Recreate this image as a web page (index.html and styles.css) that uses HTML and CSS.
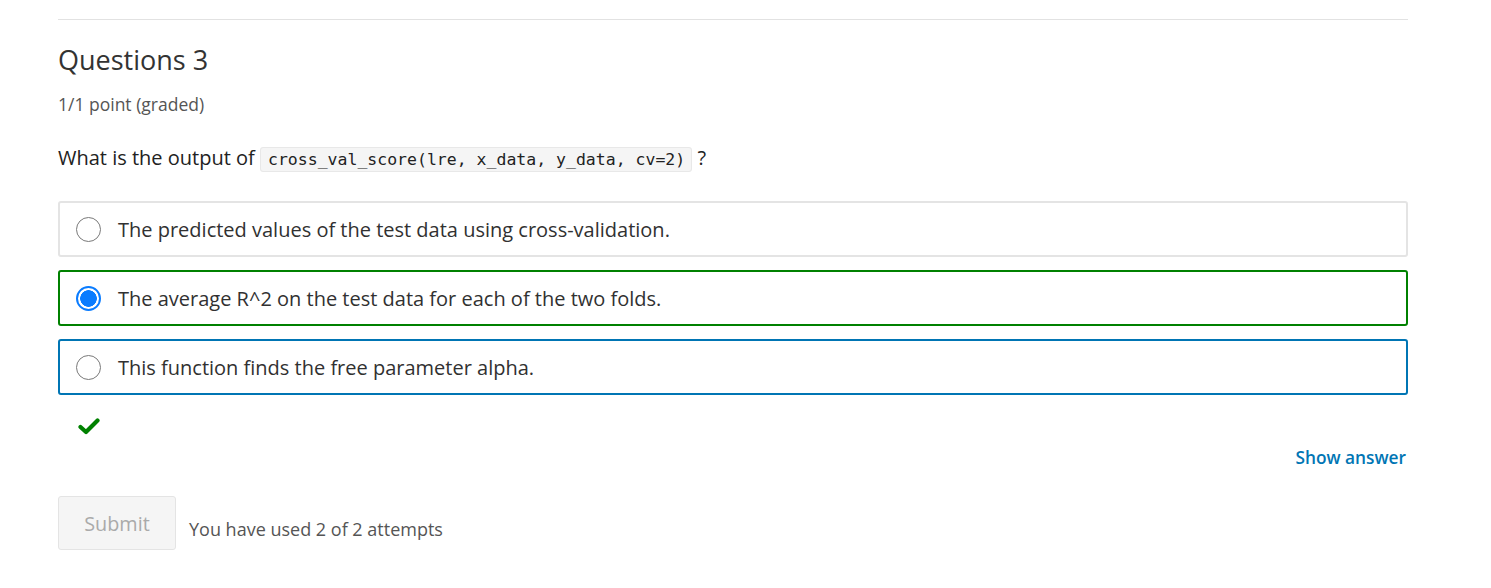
FILE: index.html
```html
<!DOCTYPE html>
<html>
<head>
<meta charset="utf-8">
<link rel="stylesheet" href="styles.css">
</head>
<body>
<div class="page">
  <hr class="rule">
  <h2 class="title">Questions 3</h2>
  <div class="points">1/1 point (graded)</div>
  <p class="question">What is the output of <code class="code">cross_val_score(lre, x_data, y_data, cv=2)</code> ?</p>
  <div class="options">
    <label class="option">
      <span class="radio"></span>
      <span class="opt-text">The predicted values of the test data using cross-validation.</span>
    </label>
    <label class="option correct">
      <span class="radio checked"></span>
      <span class="opt-text">The average R^2 on the test data for each of the two folds.</span>
    </label>
    <label class="option focused">
      <span class="radio"></span>
      <span class="opt-text">This function finds the free parameter alpha.</span>
    </label>
  </div>
  <div class="status">
    <svg class="check" width="22" height="17" viewBox="0 0 22 17"><path d="M2.5 9 L8 14 L19.5 2.5" fill="none" stroke="#008100" stroke-width="4.2" stroke-linecap="round" stroke-linejoin="round"/></svg>
  </div>
  <div class="actions-top">
    <a class="show-answer">Show answer</a>
  </div>
  <div class="actions">
    <button class="submit" disabled>Submit</button>
    <span class="attempts">You have used 2 of 2 attempts</span>
  </div>
</div>
</body>
</html>
```
FILE: styles.css
```css
html, body {
  margin: 0;
  padding: 0;
  background: #fff;
}
body {
  font-family: "Open Sans", "Liberation Sans", sans-serif;
  color: #313131;
}
.page {
  width: 1350px;
  margin-left: 58px;
  padding-top: 19px;
}
.rule {
  margin: 0;
  border: 0;
  border-top: 1px solid #e2e2e2;
}
.title {
  margin: 21px 0 0;
  font-size: 27px;
  font-weight: 400;
  line-height: 38px;
  color: #333;
}
.points {
  margin-top: 13px;
  font-size: 17.5px;
  line-height: 24px;
  color: #555;
}
.question {
  margin: 28px 0 0;
  font-size: 20px;
  line-height: 27px;
  color: #222;
}
.code {
  font-family: "DejaVu Sans Mono", "Liberation Mono", monospace;
  font-size: 16.5px;
  background: #f5f5f5;
  border: 1px solid #e8e8e8;
  border-radius: 3px;
  padding: 2px 6px 2px 7px;
  color: #222;
}
.options {
  margin-top: 28px;
  display: flex;
  flex-direction: column;
  gap: 13px;
}
.option {
  display: flex;
  align-items: center;
  height: 52px;
  border: 2px solid #e4e4e4;
  border-radius: 3px;
  padding-left: 16px;
  box-sizing: content-box;
}
.option.correct { border-color: #008100; }
.option.focused { border-color: #0075b4; }
.radio {
  width: 25px;
  height: 25px;
  border: 1.5px solid #797979;
  border-radius: 50%;
  box-sizing: border-box;
  flex: none;
}
.radio.checked {
  border: 2px solid #0a7cff;
  background: radial-gradient(circle, #0a7cff 0 8px, #fff 8.6px);
}
.opt-text {
  margin-left: 17px;
  font-size: 20px;
  color: #313131;
}
.status {
  margin-top: 23px;
  padding-left: 20px;
  height: 18px;
}
.check { display: block; }
.actions-top {
  display: flex;
  justify-content: flex-end;
  margin-top: 10px;
}
.show-answer {
  font-size: 17.3px;
  font-weight: 600;
  color: #0075b4;
  padding-right: 2px;
}
.actions {
  display: flex;
  align-items: flex-end;
  margin-top: 27px;
}
.submit {
  font-family: "Open Sans", "Liberation Sans", sans-serif;
  font-size: 19.8px;
  color: #aaa;
  background: #f5f5f5;
  border: 1px solid #e4e4e4;
  border-radius: 3px;
  width: 118px;
  height: 54px;
  padding: 0;
}
.attempts {
  margin-left: 13px;
  font-size: 18px;
  color: #555;
  line-height: 24px;
  padding-bottom: 9px;
}
```
